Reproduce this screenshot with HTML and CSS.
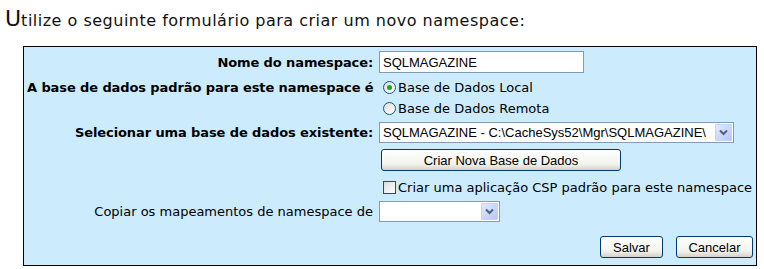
FILE: index.html
```html
<!DOCTYPE html>
<html lang="pt">
<head>
    <meta charset="UTF-8">
    <title>Novo namespace</title>
    <link rel="stylesheet" href="styles.css">
</head>
<body>
    <div class="intro"><span class="first">U</span>tilize o seguinte formulário para criar um novo namespace:</div>
    <div class="form-box">
        <div class="row row-name">
            <label class="label bold">Nome do namespace:</label>
            <div class="field"><input class="text-input" type="text" value="SQLMAGAZINE"></div>
        </div>
        <div class="row row-radios">
            <label class="label bold top">A base de dados padrão para este namespace é</label>
            <div class="field stack">
                <div class="option"><span class="radio checked"></span>Base de Dados Local</div>
                <div class="option"><span class="radio"></span>Base de Dados Remota</div>
            </div>
        </div>
        <div class="row row-select">
            <label class="label bold">Selecionar uma base de dados existente:</label>
            <div class="field">
                <div class="select wide">
                    <span class="select-text">SQLMAGAZINE - C:\CacheSys52\Mgr\SQLMAGAZINE\</span>
                    <span class="select-arrow"><svg width="9" height="7" viewBox="0 0 9 7"><path d="M1 1.5 L4.5 5 L8 1.5" fill="none" stroke="#4d6185" stroke-width="2"/></svg></span>
                </div>
            </div>
        </div>
        <div class="row row-create">
            <div class="label"></div>
            <div class="field"><button class="xp-button create">Criar Nova Base de Dados</button></div>
        </div>
        <div class="row row-check">
            <div class="label"></div>
            <div class="field"><div class="option"><span class="checkbox"></span>Criar uma aplicação CSP padrão para este namespace</div></div>
        </div>
        <div class="row row-copy">
            <label class="label">Copiar os mapeamentos de namespace de</label>
            <div class="field">
                <div class="select narrow">
                    <span class="select-text"></span>
                    <span class="select-arrow"><svg width="9" height="7" viewBox="0 0 9 7"><path d="M1 1.5 L4.5 5 L8 1.5" fill="none" stroke="#4d6185" stroke-width="2"/></svg></span>
                </div>
            </div>
        </div>
        <div class="actions">
            <button class="xp-button save">Salvar</button>
            <button class="xp-button cancel">Cancelar</button>
        </div>
    </div>
</body>
</html>
```

FILE: styles.css
```css
* {
    margin: 0;
    padding: 0;
    box-sizing: border-box;
}

body {
    background: #fff;
    font-family: "DejaVu Sans", Verdana, sans-serif;
    font-size: 13px;
    color: #000;
}

.intro {
    height: 46px;
    padding: 6px 0 0 5px;
    font-size: 16px;
    color: #111;
    letter-spacing: 0.5px;
}

.intro .first {
    font-size: 22px;
    letter-spacing: 0;
}

.form-box {
    margin-left: 23px;
    width: 734px;
    height: 220px;
    border: 1px solid #000;
    background-color: #ccecfe;
    padding: 4px 3px 0 3px;
}

.row {
    display: grid;
    grid-template-columns: 346px 1fr;
    column-gap: 6px;
    align-items: center;
}

.label {
    text-align: right;
    white-space: nowrap;
}

.label.bold {
    font-weight: bold;
    font-size: 13px;
    letter-spacing: -0.1px;
}

.label.top {
    align-self: start;
    line-height: 21px;
}

.row-name { height: 22px; margin-bottom: 4px; }
.row-radios { height: 42px; margin-bottom: 3px; }
.row-select { height: 21px; margin-bottom: 6px; }
.row-create { height: 22px; margin-bottom: 6px; }
.row-check { height: 20px; margin-bottom: 4px; }
.row-copy { height: 21px; margin-bottom: 14px; }

.stack {
    display: flex;
    flex-direction: column;
}

.option {
    display: flex;
    align-items: center;
    height: 21px;
    padding-left: 4px;
    white-space: nowrap;
}

.row-check .option {
    height: 20px;
}

.text-input {
    display: block;
    width: 205px;
    height: 22px;
    border: 1px solid #7f9db9;
    background: #fff;
    padding: 0 3px;
    font-family: "Liberation Sans", Arial, sans-serif;
    font-size: 13px;
    color: #000;
}

.radio {
    width: 13px;
    height: 13px;
    margin-right: 2px;
    border: 1px solid #1c5180;
    border-radius: 50%;
    background: linear-gradient(135deg, #dcdcd7, #fff);
    position: relative;
}

.radio.checked::after {
    content: '';
    position: absolute;
    left: 3px;
    top: 3px;
    width: 5px;
    height: 5px;
    border-radius: 50%;
    background: #21a121;
}

.checkbox {
    width: 13px;
    height: 13px;
    margin-right: 2px;
    border: 1px solid #1c5180;
    background: linear-gradient(135deg, #dcdcd7, #fff);
}

.select {
    display: flex;
    align-items: center;
    height: 21px;
    border: 1px solid #7f9db9;
    background: #fff;
    padding: 1px;
    font-family: "Liberation Sans", Arial, sans-serif;
    font-size: 13px;
}

.select.wide { width: 355px; }
.select.narrow { width: 121px; }

.select-text {
    flex: 1;
    padding-left: 2px;
    white-space: nowrap;
    overflow: hidden;
}

.select-arrow {
    width: 17px;
    height: 17px;
    display: flex;
    align-items: center;
    justify-content: center;
    border: 1px solid #c3d3fd;
    border-radius: 1px;
    background: linear-gradient(135deg, #e1eafe, #b4c8f6);
}

.xp-button {
    height: 22px;
    border: 1px solid #003c74;
    border-radius: 3px;
    background: linear-gradient(#ffffff, #f3f3ee 70%, #d6d0c5);
    font-family: "Liberation Sans", Arial, sans-serif;
    font-size: 13px;
    color: #000;
}

.xp-button.create {
    margin-left: 2px;
    width: 240px;
}

.actions {
    display: flex;
    justify-content: flex-end;
    gap: 13px;
}

.xp-button.save { width: 63px; }
.xp-button.cancel { width: 77px; }
```
